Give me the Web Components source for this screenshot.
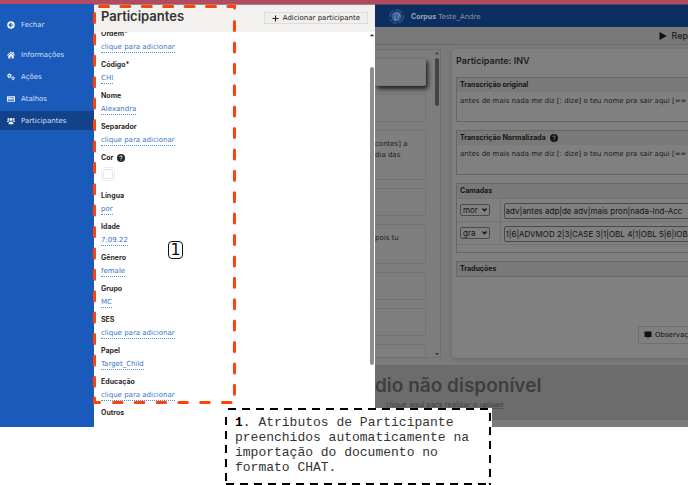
<!DOCTYPE html>
<html lang="pt">
<head>
<meta charset="utf-8">
<title>Participantes</title>
<style>
html,body{margin:0;height:100%;background:#fff;overflow:hidden}
body{font-family:"DejaVu Sans",Inter,sans-serif;font-size:7px;color:#333}
</style>
</head>
<body>
<corpus-app></corpus-app>
<script>
const define = (name, html, setup) => {
  const t = document.createElement('template');
  t.innerHTML = '<style>*{box-sizing:border-box}</style>' + html;
  customElements.define(name, class extends HTMLElement {
    connectedCallback() {
      if (this.shadowRoot) return;
      const r = this.attachShadow({mode: 'open'});
      const content = t.content.cloneNode(true);
      if (setup) setup(content, this);
      r.append(content);
    }
  });
};

const icons = {
  back: '<circle cx="8" cy="8" r="7.5"/><path fill="none" stroke="var(--hole,#195abb)" stroke-width="2.2" d="M8.5 4 4.5 8l4 4M5 8h7.5"/>',
  home: '<path d="M8 1 0 8l1.3 1.3L8 3.5l6.7 5.8L16 8l-2.5-2.2V2h-2v2zM2.6 9.6V15h4v-4h2.8v4h4V9.6L8 5z"/>',
  cogs: '<circle cx="4.800" cy="5.500" r="2.800" fill="none" stroke="currentColor" stroke-width="2.200"/><circle cx="4.800" cy="5.500" r="4.300" fill="none" stroke="currentColor" stroke-width="1" stroke-dasharray="1.800 1.800"/><circle cx="12.200" cy="10.500" r="2.300" fill="none" stroke="currentColor" stroke-width="2"/><circle cx="12.200" cy="10.500" r="3.500" fill="none" stroke="currentColor" stroke-width=".8" stroke-dasharray="1.500 1.400"/>',
  keys: '<path fill-rule="evenodd" d="M0 2.5h16v11H0zM2 5v1.500h2V5zm3.400 0v1.500h9V5zM2 8v1.200h5V8zm6.400 0v1.200h6V8zM2 10.600V12h12v-1.400z"/>',
  users: '<circle cx="8" cy="5" r="2.8"/><circle cx="2.8" cy="3.8" r="2"/><circle cx="13.2" cy="3.8" r="2"/><path d="M3 14.500c0-4 2-5.500 5-5.500s5 1.500 5 5.500zM0 10c0-2.500 1-3.500 3.500-3.500.6 0 .9.800 1.500 1.500-1.500.6-2 1.200-2.500 2zM16 10c0-2.500-1-3.500-3.500-3.500-.6 0-.9.800-1.500 1.500 1.500.6 2 1.200 2.500 2z"/>',
  plus: '<path d="M6.800 1h2.400v5.800H15v2.400H9.200V15H6.800V9.200H1V6.800h5.800z"/>',
  help: '<circle cx="8" cy="8" r="8"/><path fill="none" stroke="var(--hole,#fff)" stroke-width="2" d="M5.500 6.200C5.700 3 10.800 3.300 10.500 6 10.300 7.800 8 7.500 8 9.800M8 11v2"/>',
  play: '<path d="M1 0 15.500 8 1 16z"/>',
  chat: '<path d="M1 1h14v11h-5l-3 3.500V12H1z"/>',
  up: '<path d="M8 5l6 6H2z"/>',
  down: '<path d="M8 11l6-6H2z"/>',
  logo: '<g fill="none" stroke="currentColor"><circle cx="8" cy="8" r="7.300" stroke-width=".8" stroke-dasharray="9 2"/></g><circle cx="8" cy="8" r="5.500" fill="#2f5f92"/><path fill="none" stroke="#7997b5" stroke-width=".9" d="M5 6l3-2 3 3-2 4-3 1V8l2-1M10 4l2 4"/>'
};
customElements.define('ui-icon', class extends HTMLElement {
  connectedCallback() {
    if (this.shadowRoot) return;
    this.attachShadow({mode: 'open'}).innerHTML =
      `<style>:host{display:inline-block;flex:none;width:8px;height:8px}svg{display:block;width:100%;height:100%}</style><svg viewBox="0 0 16 16" fill="currentColor" aria-hidden="true">${icons[this.getAttribute('name')]}</svg>`;
  }
});

define('scroll-rail', `<style>
:host{display:flex;flex-direction:column;align-items:center;width:7px;flex:none}
.track{flex:1;display:flex;flex-direction:column;align-self:stretch;align-items:center;min-height:0}
.thumb{width:4px;border-radius:2px;background:var(--thumb,#8e8e8e);height:var(--size)}
.space{height:var(--start,1px)}
ui-icon{width:6px;height:6px}
ui-icon.end{display:var(--end,block)}
</style><ui-icon name="up"></ui-icon><div class="track"><div class="space"></div><div class="thumb"></div></div><ui-icon class="end" name="down"></ui-icon>`);

define('menu-item', `<style>
:host{display:block}
button{all:unset;box-sizing:border-box;display:flex;align-items:center;gap:6px;width:100%;height:19px;padding-left:7px;color:#d3e0f3;cursor:pointer}
ui-icon{color:#f0f5fc}
:host([active]) button{background:#11428a}
</style><button type="button"><ui-icon></ui-icon><slot></slot></button>`,
(r, h) => r.querySelector('ui-icon').setAttribute('name', h.getAttribute('icon')));

define('side-menu', `<style>
:host{display:block;background:#195abb;padding-top:11px}
nav{display:flex;flex-direction:column;gap:3px}
.first{margin-bottom:8px}
</style><nav>
<menu-item class="first" icon="back">Fechar</menu-item>
<menu-item icon="home">Informações</menu-item>
<menu-item icon="cogs">Ações</menu-item>
<menu-item icon="keys">Atalhos</menu-item>
<menu-item icon="users" active>Participantes</menu-item></nav>`);

define('form-field', `<style>
:host{display:flex;flex-direction:column;align-items:flex-start;gap:2px;padding-bottom:5px}
.label{font:700 7px/14px Inter,sans-serif;color:#2c2c2c}
a{color:#3a74c8;text-decoration:none;line-height:9px;border-bottom:1px dotted #5b8dd6}
a.empty{display:none}
:host(:last-of-type){padding:0}
</style><span class="label" id="l"></span><a href="#" aria-describedby="l"><slot></slot></a>`,
(r, h) => {
  r.querySelector('.label').textContent = h.getAttribute('label');
  r.querySelector('a').classList.toggle('empty', !h.textContent);
});

define('color-field', `<style>
:host{display:flex;flex-direction:column;align-items:flex-start;gap:2px;padding-bottom:8px}
label{font:700 7px/14px Inter,sans-serif;color:#222;display:flex;align-items:center;gap:4px}
button{width:14px;height:14px;border:1px solid #eee;border-radius:3px;background:#fff;padding:1px;display:block}
button i{display:block;height:100%;border:1px solid #e6e6e6;border-radius:2px}
</style><label for="c">Cor <ui-icon name="help"></ui-icon></label><button id="c" type="button"><i></i></button>`);

define('participant-panel', `<style>
:host{display:flex;flex-direction:column;background:#fff;min-height:0;overflow:hidden}
header{display:flex;justify-content:space-between;align-items:flex-start;background:#f2f1ef;height:28px;flex:none;padding:3px 7px 0;border-top:1px solid #8f8a8c;position:relative}
h1{margin:0;font:600 13px/16px Inter,sans-serif;color:#333}
button{display:flex;align-items:center;justify-content:center;gap:4px;margin-top:4px;height:12px;padding:0 7px;border:1px solid #ddd;background:#f0efed;color:#222;font:inherit}
button ui-icon{width:7px;height:7px}
.body{flex:1;display:flex;min-height:0;justify-content:space-between}
.form{flex:1;padding-left:7px;margin-top:-5px;min-height:0}
scroll-rail{--start:29px;--size:298px;--end:none}
</style>
<header><h1>Participantes</h1><button type="button"><ui-icon name="plus"></ui-icon>Adicionar participante</button></header>
<div class="body"><div class="form">
<form-field label="Ordem*">clique para adicionar</form-field>
<form-field label="Código*">CHI</form-field>
<form-field label="Nome">Alexandra</form-field>
<form-field label="Separador">clique para adicionar</form-field>
<color-field></color-field>
<form-field label="Língua">por</form-field>
<form-field label="Idade">7;09.22</form-field>
<form-field label="Gênero">female</form-field>
<form-field label="Grupo">MC</form-field>
<form-field label="SES">clique para adicionar</form-field>
<form-field label="Papel">Target_Child</form-field>
<form-field label="Educação">clique para adicionar</form-field>
<form-field label="Outros"></form-field>
</div><scroll-rail></scroll-rail></div>`);

define('line-card', `<style>
:host{display:block;flex:none;height:28px;border:1px solid #71717c;border-left:0;border-radius:0 2px 2px 0;background:#7f7f7f;padding-top:8px;line-height:11px;white-space:pre-line}
:host([active]){border-color:#777;box-shadow:2px 3px 4px #222}
:host([rows="2"]){height:50px}
:host([rows="1"]){height:40px}
</style><slot></slot>`);

define('line-list', `<style>
:host{display:flex;border:1px solid #6f6f6f;border-left:0;background:#7d7d7d;overflow:hidden;color:#1c1c1c}
.cards{flex:1;display:flex;flex-direction:column;gap:8px;padding:8px 0 0;min-height:0}
scroll-rail{--thumb:#444;--size:48px;--start:2px;margin-left:7px;color:#3c3c3c}
</style><div class="cards">
<line-card active></line-card><line-card></line-card><line-card rows="2">contes] a
dia das</line-card><line-card></line-card><line-card rows="1">pois tu</line-card><line-card></line-card><line-card></line-card><line-card></line-card>
</div><scroll-rail></scroll-rail>`);

define('text-box', `<style>
:host{display:block;border:1px solid #676767}
h3{margin:0;background:#797977;font:700 7px/14px Inter,sans-serif;color:#161616;padding-left:3px;display:flex;align-items:center;gap:4px;--hole:#797977}
</style><h3><slot name="title"></slot></h3><slot></slot>`);

define('layer-table', `<style>
:host{display:block;padding-bottom:7px}
table{border-collapse:collapse;width:100%}
td{border:1px solid #737379;border-left:0;height:23px;padding:0 3px;vertical-align:middle}
td:first-child{width:43px}
select,input{display:block;font:8px/12px Inter,sans-serif;color:#141414;background:#808080;border:1px solid #4a4a4a;border-radius:2px}
.pick{display:grid;align-items:center;width:30px}
.pick>*{grid-area:1/1}
.pick svg{justify-self:end;width:5px;height:4px;margin-right:3px;pointer-events:none}
select{appearance:none;width:100%;height:12px;line-height:10px;padding:0 0 0 2px}
input{width:100%;height:16px;padding:0 1px;margin-top:1px}
</style><table></table>`, r => {
  const rows = [['mor', 'adv|antes adp|de adv|mais pron|nada-Ind-Acc'], ['gra', '1|6|ADVMOD 2|3|CASE 3|1|OBL 4|1|OBL 5|6|IOBJ']];
  r.querySelector('table').innerHTML = rows.map(([k, v]) =>
    `<tr><td><div class="pick"><select aria-label="Camada"><option>${k}</option></select><svg viewBox="0 0 5 4"><path d="M.5 .5 2.500 2.800 4.500 .5" fill="none" stroke="#111" stroke-width="1.300"/></svg></div></td><td><input aria-label="${k}" value="${v}"></td></tr>`).join('');
});

define('line-editor', `<style>
:host{display:flex;flex-direction:column;background:#808080;border-radius:4px 0 0 4px;box-shadow:0 1px 4px #666;padding:4px 0 0 4px;gap:8px;color:#1c1c1c}
h2{margin:0;font:600 9px/16px Inter,sans-serif;color:#202020}
p{margin:0;height:29px;padding:4px 3px;line-height:11px;white-space:nowrap}
:host text-box{margin-right:-8px}
button{align-self:flex-end;margin:auto -4px 14px 0;display:flex;align-items:center;gap:3px;height:18px;width:54px;padding:0 0 0 5px;border:1px solid #6f6f6f;border-radius:2px 0 0 2px;background:#808080;font:inherit;color:#111;white-space:nowrap}
</style><h2>Participante: INV</h2>
<text-box><span slot="title">Transcrição original</span><p>antes de mais nada me diz [: dize] o teu nome pra sair aqui [==</p></text-box>
<text-box><span slot="title">Transcrição Normalizada</span><ui-icon slot="title" name="help"></ui-icon><p>antes de mais nada me diz [: dize] o teu nome pra sair aqui [==</p></text-box>
<text-box><span slot="title">Camadas</span><layer-table></layer-table></text-box>
<text-box><span slot="title">Traduções</span></text-box>
<button type="button"><ui-icon name="chat"></ui-icon>Observaç</button>`);

define('work-space', `<style>
:host{display:grid;grid-template-rows:22px 18px 1fr 55px;background:#7b7b7b;border-top:1px solid #464f61;padding-bottom:7px;overflow:hidden;min-width:0}
header{background:#0d2e60;color:#8b97aa;display:flex;align-items:center;gap:7px;padding-left:14px}
header ui-icon{width:15px;height:15px;color:#53729c}
header b{font:700 7px Inter,sans-serif;color:#9aa6b8}
.bar{background:#797977;border-bottom:1px solid #6b6b6b;display:flex;justify-content:flex-end}
.bar button{all:unset;display:flex;align-items:center;gap:5px;font:9px Inter,sans-serif;color:#111}
main{display:grid;grid-template-columns:66px 1fr;gap:11px;padding:4px 0 7px;min-height:0}
footer{background:#6c6c6c;color:#3e3e3e;display:flex;flex-direction:column;align-items:flex-start;padding-top:10px}
footer strong{font:600 19px/22px Inter,sans-serif;white-space:nowrap}
footer a{color:#3c3c3c;margin:3px 0 0 11px;line-height:10px;text-decoration:underline;text-decoration-color:#555}
</style><header><ui-icon name="logo"></ui-icon><span><b>Corpus</b> Teste_Andre</span></header>
<div class="bar"><button type="button"><ui-icon name="play"></ui-icon>Rep</button></div>
<main><line-list></line-list><line-editor></line-editor></main>
<footer><strong>dio não disponível</strong><a href="#">clique aqui para realizar o upload</a></footer>`);

define('callout-marks', `<style>
:host{position:absolute;inset:0;pointer-events:none}
svg{position:absolute;left:93px;top:4px;width:144px;height:402px;overflow:visible}
.mark{position:absolute;left:168px;top:241px;width:15px;height:18px;border:1px solid #111;border-radius:4px;background:#fff;color:#101018;font:16px/16px "DejaVu Sans",sans-serif;text-align:center}
aside{position:absolute;left:225px;top:408px;width:267px;height:78px;background:#fff;color:#333;font:13px/15px "Liberation Mono",monospace;padding:7px 0 0 10px}
aside b{color:#000}
aside svg{left:0;top:0;width:267px;height:78px}
</style>
<svg viewBox="0 0 144 402" fill="none" stroke="#ff4208" stroke-width="3" stroke-linecap="round"><path stroke-dasharray="9 12.400" d="M6.500 2.500H136M1.500 9.500V390M141.500 17.500V394"/><path stroke-dasharray="8.500 13.300" d="M20.500 398.500H139"/><path d="M1.500 394v4.500h5M135.500 2.500h6v1.500"/></svg>
<span class="mark">1</span>
<aside><svg viewBox="0 0 267 78" fill="none" stroke="#000" stroke-width="2"><path stroke-dasharray="8 6" d="M3 1H266M265 5V77M1 9V77M1 76H266"/></svg><b>1</b>. Atributos de Participante<br>preenchidos automaticamente na<br>importação do documento no<br>formato CHAT.</aside>`);

define('corpus-app', `<style>
:host{display:flex;flex-direction:column;height:100vh;position:relative;overflow:hidden}
.strip{height:4px;background:#b44a5d;flex:none}
.app{flex:1;display:grid;grid-template-columns:94px 281px 1fr;grid-template-rows:minmax(0,1fr);min-height:0;margin-bottom:58px}
</style><div class="strip"></div><div class="app"><side-menu></side-menu><participant-panel></participant-panel><work-space></work-space></div><callout-marks></callout-marks>`);
</script>
</body>
</html>
